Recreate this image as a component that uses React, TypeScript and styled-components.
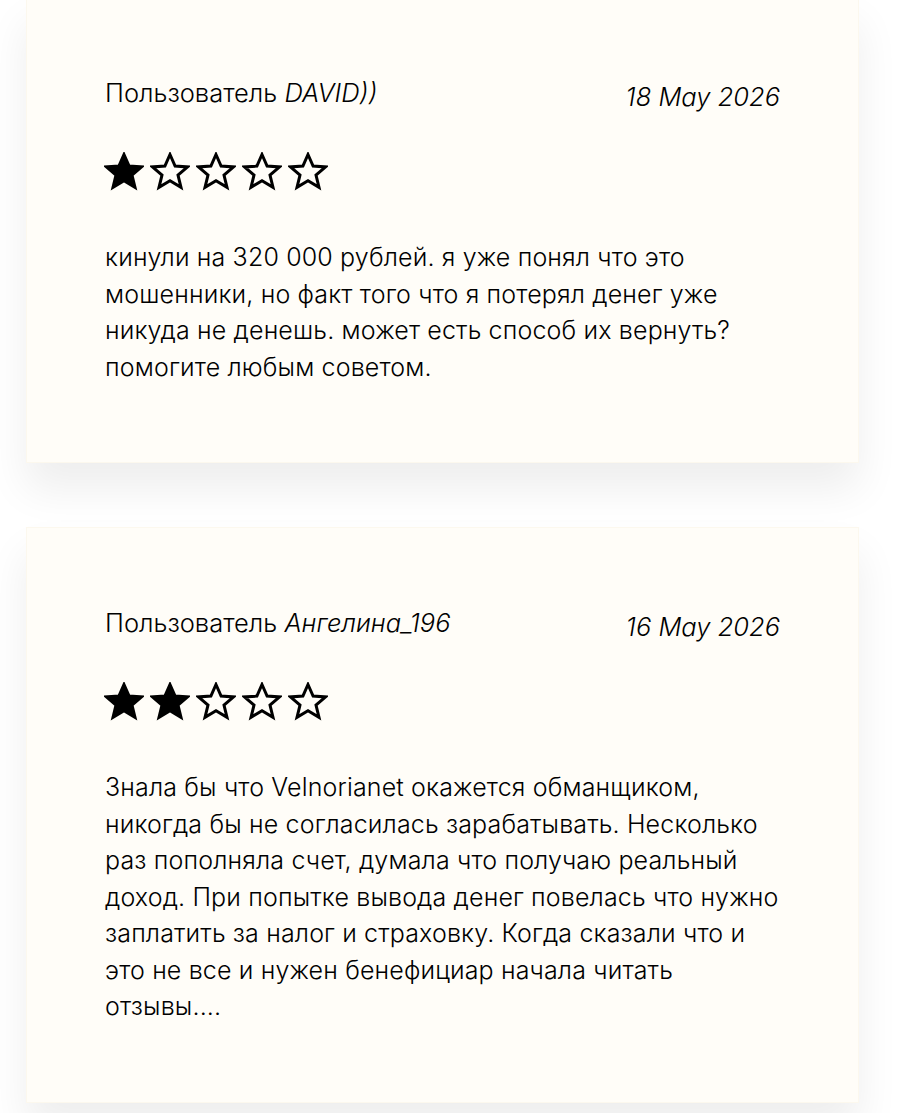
import React, { FC } from "react";
import styled, { createGlobalStyle } from "styled-components";

const GlobalStyle = createGlobalStyle`
  html, body {
    margin: 0;
    padding: 0;
    background: #ffffff;
  }
  body {
    font-family: Inter, "Noto Sans", sans-serif;
    font-weight: 300;
    color: #000;
  }
`;

const Page = styled.main`
  display: flex;
  flex-direction: column;
  gap: 64px;
  padding: 0 42px 40px 26px;
  margin-top: -3px;
`;

const Card = styled.article`
  background: #fffdf8;
  border: 1px solid #fcf8ee;
  box-shadow: 0 26px 40px rgba(0, 0, 0, 0.07);
  padding: 80px 78px 77px 78px;
  display: flex;
  flex-direction: column;
`;

const Head = styled.header`
  display: flex;
  justify-content: space-between;
  align-items: flex-start;
  font-size: 25.5px;
  line-height: 30px;
`;

const Author = styled.div``;

const Nick = styled.em`
  font-style: italic;
`;

const Date = styled.time`
  font-style: italic;
  margin-top: 4px;
`;

const Stars = styled.div`
  display: flex;
  gap: 6px;
  margin-top: 40px;
  margin-left: -1px;
`;

const Body = styled.p`
  margin: 48px -5px 0 0;
  font-size: 25px;
  letter-spacing: 0.15px;
  line-height: 36.5px;
`;

const Star: FC<{ filled: boolean }> = ({ filled }) => (
  <svg width="40" height="39" viewBox="0 0 40 39">
    <polygon
      points="20,2.5 25.1,14.1 37.6,14.9 28,23 31,35.4 20,28.7 9,35.4 12,23 2.4,14.9 14.9,14.1"
      fill={filled ? "#000" : "none"}
      stroke="#000"
      strokeWidth="3"
      strokeLinejoin="miter"
    />
  </svg>
);

type Review = { nick: string; date: string; rating: number; text: string };

const reviews: Review[] = [
  {
    nick: "DAVID))",
    date: "18 May 2026",
    rating: 1,
    text:
      "кинули на 320 000 рублей. я уже понял что это мошенники, но факт того что я потерял денег уже никуда не денешь. может есть способ их вернуть? помогите любым советом.",
  },
  {
    nick: "Ангелина_196",
    date: "16 May 2026",
    rating: 2,
    text:
      "Знала бы что Velnorianet окажется обманщиком, никогда бы не согласилась зарабатывать. Несколько раз пополняла счет, думала что получаю реальный доход. При попытке вывода денег повелась что нужно заплатить за налог и страховку. Когда сказали что и это не все и нужен бенефициар начала читать отзывы....",
  },
];

const App: FC = () => (
  <>
    <GlobalStyle />
    <Page>
      {reviews.map((r) => (
        <Card key={r.nick}>
          <Head>
            <Author>
              Пользователь <Nick>{r.nick}</Nick>
            </Author>
            <Date>{r.date}</Date>
          </Head>
          <Stars>
            {[0, 1, 2, 3, 4].map((i) => (
              <Star key={i} filled={i < r.rating} />
            ))}
          </Stars>
          <Body>{r.text}</Body>
        </Card>
      ))}
    </Page>
  </>
);

export default App;
